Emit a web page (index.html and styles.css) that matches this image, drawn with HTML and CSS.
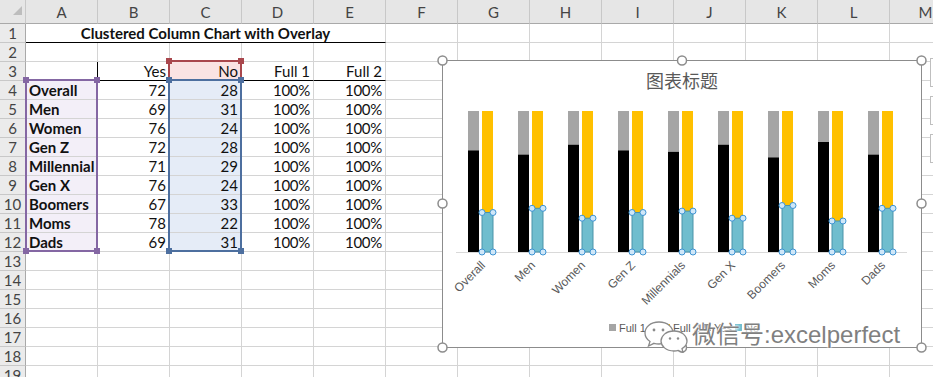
FILE: index.html
```html
<!DOCTYPE html>
<html lang="en">
<head>
    <meta charset="UTF-8">
    <meta name="viewport" content="width=device-width, initial-scale=1.0">
    <title>Clustered Column Chart with Overlay</title>
    <link rel="stylesheet" href="styles.css">
</head>
<body>
<div class="workbook">
    <table class="sheet">
        <colgroup>
            <col class="rh-col">
            <col><col><col><col><col><col><col><col><col><col><col><col><col>
        </colgroup>
        <thead>
            <tr class="hdr">
                <th class="corner"><span class="tri"></span></th>
                <th>A</th><th>B</th><th>C</th><th>D</th><th>E</th><th>F</th><th>G</th>
                <th>H</th><th>I</th><th>J</th><th>K</th><th>L</th><th>M</th>
            </tr>
        </thead>
        <tbody>
            <tr><th>1</th><td class="title" colspan="5">Clustered Column Chart with Overlay</td><td></td><td></td><td></td><td></td><td></td><td></td><td></td><td></td></tr>
            <tr><th>2</th><td></td><td></td><td></td><td></td><td></td><td></td><td></td><td></td><td></td><td></td><td></td><td></td><td></td></tr>
            <tr><th>3</th><td class="edge-r"></td><td class="num under">Yes</td><td class="num under rng-name">No</td><td class="num under">Full 1</td><td class="num under">Full 2</td><td></td><td></td><td></td><td></td><td></td><td></td><td></td><td></td></tr>
            <tr><th>4</th><td class="lbl rng-cat">Overall</td><td class="num">72</td><td class="num rng-val">28</td><td class="num pct">100%</td><td class="num pct">100%</td><td></td><td></td><td></td><td></td><td></td><td></td><td></td><td></td></tr>
            <tr><th>5</th><td class="lbl rng-cat">Men</td><td class="num">69</td><td class="num rng-val">31</td><td class="num pct">100%</td><td class="num pct">100%</td><td></td><td></td><td></td><td></td><td></td><td></td><td></td><td></td></tr>
            <tr><th>6</th><td class="lbl rng-cat">Women</td><td class="num">76</td><td class="num rng-val">24</td><td class="num pct">100%</td><td class="num pct">100%</td><td></td><td></td><td></td><td></td><td></td><td></td><td></td><td></td></tr>
            <tr><th>7</th><td class="lbl rng-cat">Gen Z</td><td class="num">72</td><td class="num rng-val">28</td><td class="num pct">100%</td><td class="num pct">100%</td><td></td><td></td><td></td><td></td><td></td><td></td><td></td><td></td></tr>
            <tr><th>8</th><td class="lbl rng-cat">Millennial</td><td class="num">71</td><td class="num rng-val">29</td><td class="num pct">100%</td><td class="num pct">100%</td><td></td><td></td><td></td><td></td><td></td><td></td><td></td><td></td></tr>
            <tr><th>9</th><td class="lbl rng-cat">Gen X</td><td class="num">76</td><td class="num rng-val">24</td><td class="num pct">100%</td><td class="num pct">100%</td><td></td><td></td><td></td><td></td><td></td><td></td><td></td><td></td></tr>
            <tr><th>10</th><td class="lbl rng-cat">Boomers</td><td class="num">67</td><td class="num rng-val">33</td><td class="num pct">100%</td><td class="num pct">100%</td><td></td><td></td><td></td><td></td><td></td><td></td><td></td><td></td></tr>
            <tr><th>11</th><td class="lbl rng-cat">Moms</td><td class="num">78</td><td class="num rng-val">22</td><td class="num pct">100%</td><td class="num pct">100%</td><td></td><td></td><td></td><td></td><td></td><td></td><td></td><td></td></tr>
            <tr><th>12</th><td class="lbl rng-cat">Dads</td><td class="num">69</td><td class="num rng-val">31</td><td class="num pct">100%</td><td class="num pct">100%</td><td></td><td></td><td></td><td></td><td></td><td></td><td></td><td></td></tr>
            <tr><th>13</th><td></td><td></td><td></td><td></td><td></td><td></td><td></td><td></td><td></td><td></td><td></td><td></td><td></td></tr>
            <tr><th>14</th><td></td><td></td><td></td><td></td><td></td><td></td><td></td><td></td><td></td><td></td><td></td><td></td><td></td></tr>
            <tr><th>15</th><td></td><td></td><td></td><td></td><td></td><td></td><td></td><td></td><td></td><td></td><td></td><td></td><td></td></tr>
            <tr><th>16</th><td></td><td></td><td></td><td></td><td></td><td></td><td></td><td></td><td></td><td></td><td></td><td></td><td></td></tr>
            <tr><th>17</th><td></td><td></td><td></td><td></td><td></td><td></td><td></td><td></td><td></td><td></td><td></td><td></td><td></td></tr>
            <tr><th>18</th><td></td><td></td><td></td><td></td><td></td><td></td><td></td><td></td><td></td><td></td><td></td><td></td><td></td></tr>
            <tr><th>19</th><td></td><td></td><td></td><td></td><td></td><td></td><td></td><td></td><td></td><td></td><td></td><td></td><td></td></tr>
        </tbody>
    </table>

    <!-- chart source ranges highlighted by Excel -->
    <div class="range range-cat"><i class="h tl"></i><i class="h tr"></i><i class="h bl"></i><i class="h br"></i></div>
    <div class="range range-name"><i class="h tl"></i><i class="h tr"></i></div>
    <div class="range range-val"><i class="h tl"></i><i class="h tr"></i><i class="h bl"></i><i class="h br"></i></div>

    <!-- floating chart object -->
    <svg class="chart" width="480" height="288" viewBox="0 0 480 288">
        <rect x="0.5" y="0.5" width="479" height="287" fill="#fff" stroke="#8c8c8c"/>
        <text class="chart-title" x="240" y="28" text-anchor="middle">图表标题</text>
        <line x1="14" y1="192.5" x2="465" y2="192.5" stroke="#d9d9d9"/>

        <g class="bars">
            <rect class="full1" x="26" y="51" width="11" height="141"/><rect class="yes" x="26" y="90.5" width="11" height="101.5"/>
            <rect class="full1" x="76" y="51" width="11" height="141"/><rect class="yes" x="76" y="94.7" width="11" height="97.3"/>
            <rect class="full1" x="126" y="51" width="11" height="141"/><rect class="yes" x="126" y="84.8" width="11" height="107.2"/>
            <rect class="full1" x="176" y="51" width="11" height="141"/><rect class="yes" x="176" y="90.5" width="11" height="101.5"/>
            <rect class="full1" x="226" y="51" width="11" height="141"/><rect class="yes" x="226" y="91.9" width="11" height="100.1"/>
            <rect class="full1" x="276" y="51" width="11" height="141"/><rect class="yes" x="276" y="84.8" width="11" height="107.2"/>
            <rect class="full1" x="326" y="51" width="11" height="141"/><rect class="yes" x="326" y="97.5" width="11" height="94.5"/>
            <rect class="full1" x="376" y="51" width="11" height="141"/><rect class="yes" x="376" y="82" width="11" height="110"/>
            <rect class="full1" x="426" y="51" width="11" height="141"/><rect class="yes" x="426" y="94.7" width="11" height="97.3"/>

            <rect class="full2" x="40" y="51" width="11" height="141"/><rect class="no" x="40" y="152.5" width="11" height="39.5"/>
            <rect class="full2" x="90" y="51" width="11" height="141"/><rect class="no" x="90" y="148.3" width="11" height="43.7"/>
            <rect class="full2" x="140" y="51" width="11" height="141"/><rect class="no" x="140" y="158.2" width="11" height="33.8"/>
            <rect class="full2" x="190" y="51" width="11" height="141"/><rect class="no" x="190" y="152.5" width="11" height="39.5"/>
            <rect class="full2" x="240" y="51" width="11" height="141"/><rect class="no" x="240" y="151.1" width="11" height="40.9"/>
            <rect class="full2" x="290" y="51" width="11" height="141"/><rect class="no" x="290" y="158.2" width="11" height="33.8"/>
            <rect class="full2" x="340" y="51" width="11" height="141"/><rect class="no" x="340" y="145.5" width="11" height="46.5"/>
            <rect class="full2" x="390" y="51" width="11" height="141"/><rect class="no" x="390" y="161" width="11" height="31"/>
            <rect class="full2" x="440" y="51" width="11" height="141"/><rect class="no" x="440" y="148.3" width="11" height="43.7"/>
        </g>

        <!-- selection points on the "No" series -->
        <g class="pts">
            <circle cx="40" cy="152.5" r="3"/><circle cx="51" cy="152.5" r="3"/><circle cx="40" cy="192" r="3"/><circle cx="51" cy="192" r="3"/>
            <circle cx="90" cy="148.3" r="3"/><circle cx="101" cy="148.3" r="3"/><circle cx="90" cy="192" r="3"/><circle cx="101" cy="192" r="3"/>
            <circle cx="140" cy="158.2" r="3"/><circle cx="151" cy="158.2" r="3"/><circle cx="140" cy="192" r="3"/><circle cx="151" cy="192" r="3"/>
            <circle cx="190" cy="152.5" r="3"/><circle cx="201" cy="152.5" r="3"/><circle cx="190" cy="192" r="3"/><circle cx="201" cy="192" r="3"/>
            <circle cx="240" cy="151.1" r="3"/><circle cx="251" cy="151.1" r="3"/><circle cx="240" cy="192" r="3"/><circle cx="251" cy="192" r="3"/>
            <circle cx="290" cy="158.2" r="3"/><circle cx="301" cy="158.2" r="3"/><circle cx="290" cy="192" r="3"/><circle cx="301" cy="192" r="3"/>
            <circle cx="340" cy="145.5" r="3"/><circle cx="351" cy="145.5" r="3"/><circle cx="340" cy="192" r="3"/><circle cx="351" cy="192" r="3"/>
            <circle cx="390" cy="161" r="3"/><circle cx="401" cy="161" r="3"/><circle cx="390" cy="192" r="3"/><circle cx="401" cy="192" r="3"/>
            <circle cx="440" cy="148.3" r="3"/><circle cx="451" cy="148.3" r="3"/><circle cx="440" cy="192" r="3"/><circle cx="451" cy="192" r="3"/>
        </g>

        <g class="cats" text-anchor="end">
            <text transform="translate(44 206) rotate(-45)">Overall</text>
            <text transform="translate(94 206) rotate(-45)">Men</text>
            <text transform="translate(144 206) rotate(-45)">Women</text>
            <text transform="translate(194 206) rotate(-45)">Gen Z</text>
            <text transform="translate(244 206) rotate(-45)">Millennials</text>
            <text transform="translate(294 206) rotate(-45)">Gen X</text>
            <text transform="translate(344 206) rotate(-45)">Boomers</text>
            <text transform="translate(394 206) rotate(-45)">Moms</text>
            <text transform="translate(444 206) rotate(-45)">Dads</text>
        </g>

        <g class="legend">
            <rect x="167" y="264" width="7" height="7" fill="#a5a5a5"/><text x="177" y="272">Full 1</text>
            <rect x="221" y="264" width="7" height="7" fill="#ffc000"/><text x="231" y="272">Full 2</text>
            <rect x="262" y="264" width="7" height="7" fill="#000"/><text x="272" y="272">Yes</text>
            <rect x="293" y="264" width="7" height="7" fill="#6fbdce"/><text x="303" y="272">No</text>
        </g>

        <g class="frame-handles">
            <circle cx="0.5" cy="0.5" r="4.5"/><circle cx="240" cy="0.5" r="4.5"/><circle cx="479.5" cy="0.5" r="4.5"/>
            <circle cx="0.5" cy="143.5" r="4.5"/><circle cx="479.5" cy="143.5" r="4.5"/>
            <circle cx="0.5" cy="287.5" r="4.5"/><circle cx="240" cy="287.5" r="4.5"/><circle cx="479.5" cy="287.5" r="4.5"/>
        </g>
    </svg>

    <!-- chart side buttons, cut off by the window edge -->
    <div class="chart-btns">
        <span class="cbtn"></span>
        <span class="cbtn"></span>
        <span class="cbtn"></span>
    </div>

    <div class="watermark">
        <svg class="wm-logo" width="48" height="34" viewBox="0 0 48 34">
            <path d="M16 3 C7 3 2 8.5 2 14 C2 17.5 4 20.5 7 22.5 L5.5 27 L11 24.3 C12.6 24.8 14.3 25 16 25 C25 25 30 19.5 30 14 C30 8.5 25 3 16 3 Z" fill="#fff" stroke="#8a8a8a" stroke-width="1.3"/>
            <circle cx="11" cy="11" r="1.4" fill="#8a8a8a"/><circle cx="20" cy="11" r="1.4" fill="#8a8a8a"/>
            <path d="M31 12 C23 12 18 17 18 22 C18 27 23 32 31 32 C32.5 32 34 31.8 35.3 31.4 L40 33.5 L39 29.6 C42.3 27.7 44 25 44 22 C44 17 39 12 31 12 Z" fill="#fff" stroke="#8a8a8a" stroke-width="1.3"/>
            <circle cx="27" cy="19.5" r="1.2" fill="#8a8a8a"/><circle cx="35" cy="19.5" r="1.2" fill="#8a8a8a"/>
        </svg>
        <span class="wm-text">微信号:excelperfect</span>
    </div>
</div>
</body>
</html>
```

FILE: styles.css
```css
body {
    margin: 0;
    background-color: #fff;
    overflow: hidden;
    font-family: Lato, "Noto Sans CJK SC", sans-serif;
}

.workbook {
    position: relative;
    width: 933px;
    height: 377px;
    overflow: hidden;
}

/* grid */

.sheet {
    border-collapse: separate;
    border-spacing: 0;
    table-layout: fixed;
    width: 962px;
}

.sheet col {
    width: 72px;
}

.sheet col.rh-col {
    width: 26px;
}

.sheet th,
.sheet td {
    box-sizing: border-box;
    height: 19px;
    padding: 0 3px;
    border-right: 1px solid #d4d4d4;
    border-bottom: 1px solid #d4d4d4;
    font-size: 15px;
    line-height: 18px;
    white-space: nowrap;
    overflow: hidden;
    vertical-align: bottom;
    color: #111;
}

.sheet .hdr th {
    height: 24px;
    padding: 0;
    background-color: #e6e6e6;
    border-right-color: #c8c8c8;
    border-bottom-color: #a9a9a9;
    font-weight: normal;
    color: #444;
    text-align: center;
    vertical-align: middle;
    line-height: 22px;
}

.sheet tbody th {
    padding: 0;
    background-color: #ebebeb;
    border-right-color: #a9a9a9;
    border-bottom-color: #c8c8c8;
    font-weight: normal;
    color: #444;
    text-align: center;
}

.sheet .corner {
    vertical-align: bottom;
}

.tri {
    display: block;
    width: 0;
    height: 0;
    margin: 0 3px 3px auto;
    border-left: 9px solid transparent;
    border-bottom: 9px solid #bdbdbd;
}

.title {
    text-align: center;
    font-weight: bold;
    border-bottom-color: #000 !important;
}

.num {
    text-align: right;
}

.pct {
    color: #3a3a3a;
    font-size: 14px;
    letter-spacing: -0.3px;
}

.lbl {
    font-weight: bold;
}

.under {
    border-bottom-color: #000 !important;
}

.edge-r {
    border-right-color: #000 !important;
}

.rng-cat {
    background-color: #f3eff8;
}

.rng-name {
    background-color: #fae3e3;
}

.rng-val {
    background-color: #e5ecf7;
}

/* range outlines */

.range {
    position: absolute;
    box-sizing: border-box;
    border: 2px solid;
}

.range-cat {
    left: 25px;
    top: 79px;
    width: 73px;
    height: 173px;
    border-color: #8467a3;
}

.range-name {
    left: 168px;
    top: 60px;
    width: 74px;
    height: 21px;
    border-color: #a9474d;
}

.range-val {
    left: 168px;
    top: 79px;
    width: 74px;
    height: 173px;
    border-color: #4d6f9f;
}

.range .h {
    position: absolute;
    width: 6px;
    height: 6px;
}

.range-cat .h { background-color: #8467a3; }
.range-name .h { background-color: #a9474d; }
.range-val .h { background-color: #4d6f9f; }

.h.tl { left: -4px; top: -4px; }
.h.tr { right: -4px; top: -4px; }
.h.bl { left: -4px; bottom: -4px; }
.h.br { right: -4px; bottom: -4px; }

/* chart */

.chart {
    position: absolute;
    left: 442px;
    top: 60px;
    overflow: visible;
}

.chart-title {
    font-family: "Noto Sans CJK SC", sans-serif;
    font-size: 18px;
    fill: #595959;
}

.full1 { fill: #a5a5a5; }
.yes { fill: #000; }
.full2 { fill: #ffc000; }

.no {
    fill: #6fbdce;
    stroke: #4a93a9;
    stroke-width: 1;
}

.pts circle {
    fill: #cfe7f8;
    stroke: #3d93d3;
    stroke-width: 1;
}

.cats text {
    font-family: "Liberation Sans", sans-serif;
    font-size: 12px;
    fill: #595959;
}

.legend text {
    font-family: "Liberation Sans", sans-serif;
    font-size: 11px;
    fill: #595959;
}

.frame-handles circle {
    fill: #fff;
    stroke: #8c8c8c;
    stroke-width: 1.5;
}

.chart-btns {
    position: absolute;
    left: 930px;
    top: 58px;
    display: flex;
    flex-direction: column;
    gap: 9px;
}

.cbtn {
    display: block;
    width: 26px;
    height: 29px;
    box-sizing: border-box;
    border: 1px solid #bfbfbf;
    background-color: #fff;
}

/* watermark on the screenshot */

.watermark {
    position: absolute;
    left: 643px;
    top: 318px;
    display: flex;
    align-items: flex-start;
}

.wm-logo {
    display: block;
    margin-top: 1px;
}

.wm-text {
    margin-left: 1px;
    margin-top: 2px;
    font-family: "Liberation Sans", "Noto Sans CJK SC", sans-serif;
    font-size: 24px;
    line-height: 30px;
    color: #808080;
    text-shadow: 0 0 2px #fff, 0 0 2px #fff, 0 0 3px #fff;
}
```
